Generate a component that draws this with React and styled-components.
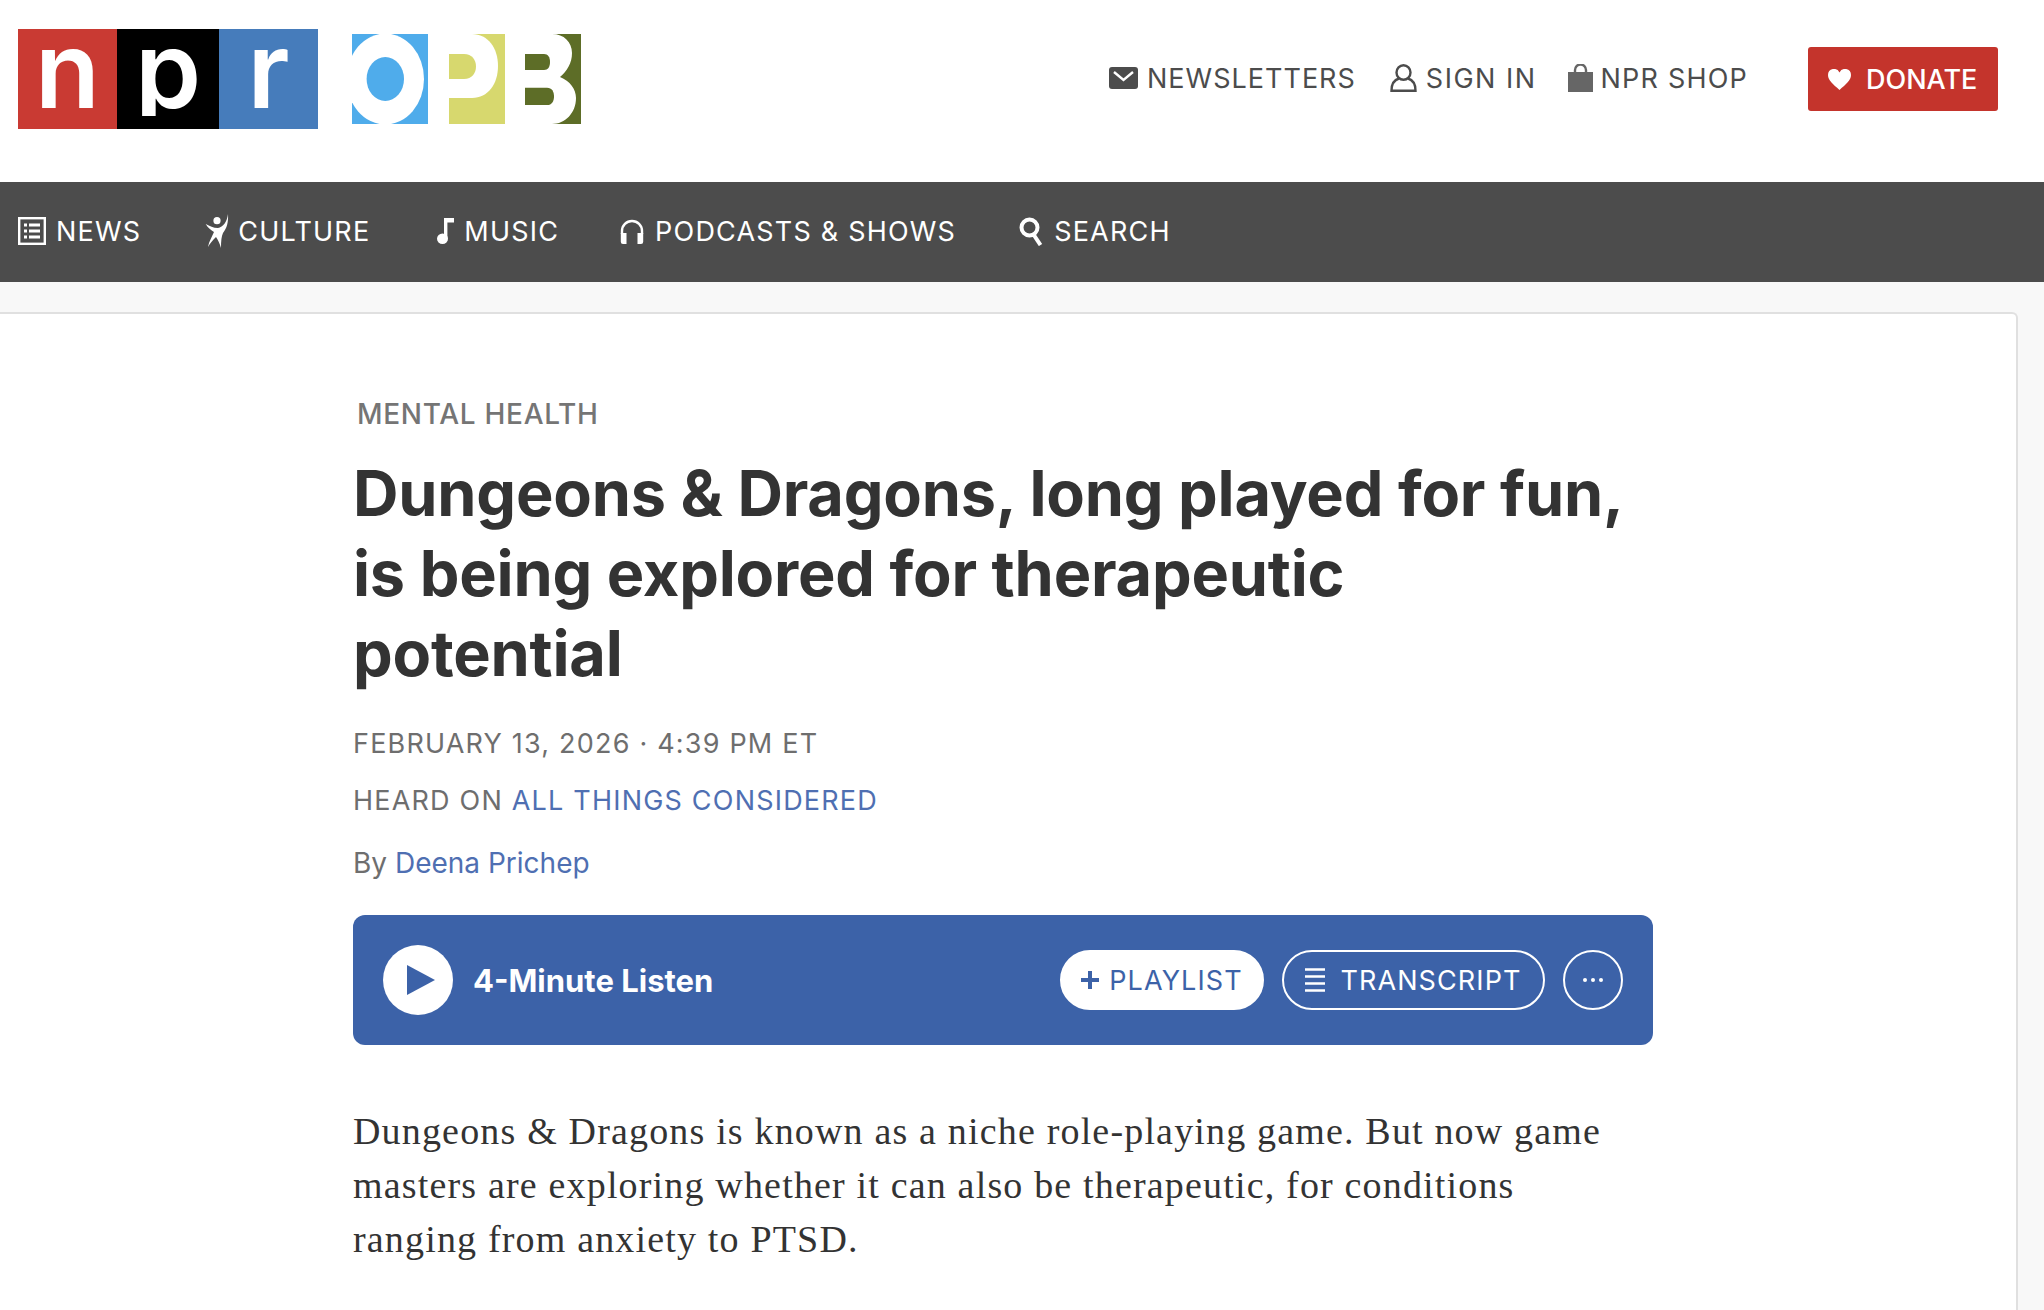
import styled, { createGlobalStyle } from "styled-components";

const GlobalStyle = createGlobalStyle`
  html, body {
    margin: 0;
    padding: 0;
    background: #f8f8f8;
  }
  body {
    font-family: "Inter", "Liberation Sans", sans-serif;
  }
`;

const MailIcon = () => (
  <svg width="29" height="22" viewBox="0 0 29 22">
    <rect width="29" height="22" rx="3" fill="#4c4c4c" />
    <path d="M5 5l9.500 8L24 5" fill="none" stroke="#fff" strokeWidth="2.400" />
  </svg>
);

const UserIcon = () => (
  <svg width="27" height="28" viewBox="0 0 27 28" fill="none" stroke="#4c4c4c" strokeWidth="2.400">
    <ellipse cx="13.500" cy="8.500" rx="7" ry="7.300" />
    <path d="M9 14.500C4 16 1.500 19.500 1.500 26.700h24C25.500 19.500 23 16 18 14.500" />
  </svg>
);

const BagIcon = () => (
  <svg width="25" height="28" viewBox="0 0 25 28">
    <rect y="8" width="25" height="20" fill="#666" />
    <path d="M7 9V6a5.500 5.500 0 0 1 11 0v3" fill="none" stroke="#666" strokeWidth="2.400" />
  </svg>
);

const HeartIcon = () => (
  <svg width="23" height="21" viewBox="0 0 23 21">
    <path d="M11.500 21C5 15 0 11.500 0 6a6 6 0 0 1 11.500-2.400A6 6 0 0 1 23 6c0 5.500-5 9-11.500 15z" fill="#fff" />
  </svg>
);

const NewsIcon = () => (
  <svg width="28" height="28" viewBox="0 0 28 28" fill="none" stroke="#fff">
    <rect x="1.200" y="1.200" width="25.600" height="25.600" strokeWidth="2.400" />
    <path d="M6 8h3M11 8h11M6 14h3M11 14h11M6 20h3M11 20h11" strokeWidth="3" />
  </svg>
);

const CultureIcon = () => (
  <svg width="24" height="35" viewBox="0 0 24 35" fill="#fff">
    <circle cx="12" cy="6.700" r="3.600" />
    <path d="M.7 10C5 12 8 14 13 14c5-1 9-6 10-14 .5 8-1 14-5 19-1.500 3-2 8-2 15-1.500-5-3-8-5-11-3 3-6 6-8 10 1-6 4-10 6-15-3-2-6-4-8.300-8z" />
  </svg>
);

const NoteIcon = () => (
  <svg width="17" height="26" viewBox="0 0 17 26" fill="#fff">
    <rect x="7" width="10" height="4.500" />
    <rect x="7" width="3.400" height="21" />
    <ellipse cx="5.500" cy="20.800" rx="5.500" ry="5.200" />
  </svg>
);

const HeadphonesIcon = () => (
  <svg width="24" height="25" viewBox="0 0 24 25">
    <path d="M2 15v-3a10 10 0 0 1 20 0v3" fill="none" stroke="#fff" strokeWidth="2.400" />
    <path d="M.8 14h5.700v11H3a2.200 2.200 0 0 1-2.200-2.200zM23.200 14h-5.700v11H21a2.200 2.200 0 0 0 2.200-2.200z" fill="#fff" />
  </svg>
);

const SearchIcon = () => (
  <svg width="24" height="29" viewBox="0 0 24 29" fill="none" stroke="#fff">
    <circle cx="10.500" cy="10.500" r="8" strokeWidth="4" />
    <path d="M14.500 17.500L21.500 28" strokeWidth="4" />
  </svg>
);

const PlayIcon = () => (
  <svg width="28" height="30" viewBox="0 0 28 30">
    <path d="M0 0l28 15L0 30z" fill="#3c62a8" />
  </svg>
);

const PlusIcon = () => (
  <svg width="18" height="18" viewBox="0 0 18 18">
    <path d="M9 0v18M0 9h18" stroke="#3c62a8" strokeWidth="4" />
  </svg>
);

const LinesIcon = () => (
  <svg width="20" height="24" viewBox="0 0 20 24">
    <path d="M0 1.500h20M0 8.500h20M0 15.500h20M0 22.500h20" stroke="#fff" strokeWidth="2.600" />
  </svg>
);

// the OPB mark: coloured tiles with the white letterforms laid over them
const OpbLogo = () => (
  <svg width="229" height="90" viewBox="0 0 229 90">
    <rect width="76" height="90" fill="#4faceb" />
    <ellipse cx="33.300" cy="45" rx="38.700" ry="45.500" fill="#fff" />
    <ellipse cx="33.300" cy="45" rx="18.700" ry="22" fill="#4faceb" />
    <rect x="97" width="56" height="90" fill="#d7d86e" />
    <path d="M97 0h23c16 0 26 14 26 32s-10 32-26 32H97z" fill="#fff" />
    <path d="M97 20h15c8 0 12 6 12 12.500S120 45 112 45H97z" fill="#d7d86e" />
    <rect x="173" width="56" height="90" fill="#5d6d27" />
    <path d="M173 0h27c12 0 20 8 20 19 0 10-5 18-12 24 10 4 16 12 16 21 0 15-11 26-24 26h-27z" fill="#fff" />
    <path d="M173 20h19c4 0 6 3 6 8s-2 8-6 8h-19z" fill="#5d6d27" />
    <path d="M173 53.700h22c5 0 7 4 7 8.700S200 71 195 71h-22z" fill="#5d6d27" />
  </svg>
);

const Header = styled.header`
  height: 182px;
  box-sizing: border-box;
  background: #fff;
  display: flex;
  align-items: center;
  justify-content: space-between;
  padding: 0 46px 24px 18px;
`;

const Logos = styled.div`
  display: flex;
  align-items: center;
  gap: 34px;
`;

const NprLogo = styled.div`
  display: flex;
`;

const NprTile = styled.span`
  width: ${(p) => p.$width}px;
  height: 100px;
  background: ${(p) => p.$color};
  color: #fff;
  font-family: "Inter", sans-serif;
  font-weight: 600;
  font-size: 106px;
  line-height: 81px;
  text-align: center;
`;

// the logo's p has a short tail, so the letter stops above the tile's foot
const NprLetter = styled.span`
  display: block;
  clip-path: inset(-20px -20px -6px -20px);
`;

const UtilityNav = styled.nav`
  display: flex;
  align-items: center;
`;

const UtilityLink = styled.a`
  display: flex;
  align-items: center;
  gap: ${(p) => p.$gap}px;
  margin-right: ${(p) => p.$after}px;
  padding-bottom: 2px;
  color: #4c4c4c;
  font-size: 27px;
  letter-spacing: ${(p) => p.$spacing}px;
`;

const DonateButton = styled.a`
  width: 190px;
  height: 64px;
  box-sizing: border-box;
  display: flex;
  align-items: center;
  gap: 15px;
  padding-left: 20px;
  background: #c4342c;
  border-radius: 3px;
  color: #fff;
  font-size: 27px;
  font-weight: 500;
`;

const MainNav = styled.nav`
  height: 100px;
  box-sizing: border-box;
  background: #4c4c4c;
  display: flex;
  align-items: center;
  padding: 0 0 2px 18px;
`;

const MainNavLink = styled.a`
  display: flex;
  align-items: center;
  gap: ${(p) => p.$gap}px;
  margin-right: ${(p) => p.$after}px;
  color: #fff;
  font-size: 27px;
  letter-spacing: 1.200px;
`;

const Card = styled.main`
  margin: 30px 26px 0 0;
  height: 998px;
  box-sizing: border-box;
  background: #fff;
  border: 2px solid #e0e0e0;
  border-left: none;
  border-bottom: none;
  border-radius: 0 6px 0 0;
  padding: 82px 0 0 353px;
  overflow: hidden;
`;

const Article = styled.article`
  width: 1300px;
`;

const Kicker = styled.div`
  margin-left: 4px;
  color: #757575;
  font-size: 28px;
  line-height: 36px;
  font-weight: 500;
  letter-spacing: 0.700px;
`;

const Title = styled.h1`
  margin: 21px 0 0;
  max-width: 1272px;
  color: #333;
  font-size: 63px;
  line-height: 80px;
  font-weight: 700;
  letter-spacing: -0.200px;
`;

const MetaLine = styled.div`
  margin-top: ${(p) => p.$top}px;
  color: #6e6e6e;
  font-size: ${(p) => p.$size}px;
  line-height: 36px;
  letter-spacing: ${(p) => p.$spacing}px;
`;

const MetaLink = styled.a`
  color: #4f6fb2;
`;

const PlayerBar = styled.div`
  margin-top: 34px;
  height: 130px;
  box-sizing: border-box;
  background: #3c62a8;
  border-radius: 12px;
  display: flex;
  align-items: center;
  padding: 0 30px;
`;

const PlayButton = styled.button`
  width: 70px;
  height: 70px;
  border: none;
  border-radius: 50%;
  background: #fff;
  padding: 0 0 0 6px;
  display: flex;
  align-items: center;
  justify-content: center;
`;

const ListenLabel = styled.span`
  margin-left: 20px;
  flex: 1;
  color: #fff;
  font-size: 31px;
  font-weight: 700;
`;

const PillButton = styled.button`
  height: 60px;
  width: ${(p) => p.$width}px;
  box-sizing: border-box;
  margin-left: ${(p) => p.$left}px;
  border: 2px solid #fff;
  border-radius: 30px;
  background: ${(p) => (p.$filled ? "#fff" : "transparent")};
  color: ${(p) => (p.$filled ? "#3c62a8" : "#fff")};
  display: flex;
  align-items: center;
  justify-content: center;
  gap: ${(p) => p.$gap || 0}px;
  padding: 0;
  font-family: "Inter", sans-serif;
  font-size: 27px;
  letter-spacing: 1.100px;
`;

const MoreDots = styled.span`
  display: flex;
  gap: 4px;
  & > i {
    width: 4px;
    height: 4px;
    border-radius: 50%;
    background: #fff;
  }
`;

const Summary = styled.p`
  margin: 59px 0 0;
  width: 1270px;
  color: #333;
  font-family: "Liberation Serif", serif;
  font-size: 38px;
  line-height: 54px;
  letter-spacing: 1.170px;
`;

export default function App() {
  return (
    <>
      <GlobalStyle />
      <Header>
        <Logos>
          <NprLogo>
            <NprTile $width={99} $color="#c93a33"><NprLetter>n</NprLetter></NprTile>
            <NprTile $width={102} $color="#000"><NprLetter>p</NprLetter></NprTile>
            <NprTile $width={99} $color="#467cbb"><NprLetter>r</NprLetter></NprTile>
          </NprLogo>
          <OpbLogo />
        </Logos>
        <UtilityNav>
          <UtilityLink $gap={9} $after={34} $spacing={1}><MailIcon />NEWSLETTERS</UtilityLink>
          <UtilityLink $gap={9} $after={31} $spacing={1.5}><UserIcon />SIGN IN</UtilityLink>
          <UtilityLink $gap={8} $after={60} $spacing={1.2}><BagIcon />NPR SHOP</UtilityLink>
          <DonateButton><HeartIcon />DONATE</DonateButton>
        </UtilityNav>
      </Header>
      <MainNav>
        <MainNavLink $gap={10} $after={64}><NewsIcon />NEWS</MainNavLink>
        <MainNavLink $gap={9} $after={67}><CultureIcon />CULTURE</MainNavLink>
        <MainNavLink $gap={10} $after={61}><NoteIcon />MUSIC</MainNavLink>
        <MainNavLink $gap={11} $after={63}><HeadphonesIcon />PODCASTS &amp; SHOWS</MainNavLink>
        <MainNavLink $gap={11} $after={0}><SearchIcon />SEARCH</MainNavLink>
      </MainNav>
      <Card>
        <Article>
          <Kicker>MENTAL HEALTH</Kicker>
          <Title>
            Dungeons &amp; Dragons, long played for fun, is being explored for therapeutic potential
          </Title>
          <MetaLine $top={33} $size={27} $spacing={1.2}>FEBRUARY 13, 2026 · 4:39 PM ET</MetaLine>
          <MetaLine $top={21} $size={27} $spacing={1.2}>HEARD ON <MetaLink>ALL THINGS CONSIDERED</MetaLink></MetaLine>
          <MetaLine $top={26} $size={28} $spacing={0}>By <MetaLink>Deena Prichep</MetaLink></MetaLine>
          <PlayerBar>
            <PlayButton><PlayIcon /></PlayButton>
            <ListenLabel>4-Minute Listen</ListenLabel>
            <PillButton $filled $width={204} $gap={10}><PlusIcon />PLAYLIST</PillButton>
            <PillButton $width={263} $left={18} $gap={15}><LinesIcon />TRANSCRIPT</PillButton>
            <PillButton $width={60} $left={18}><MoreDots><i /><i /><i /></MoreDots></PillButton>
          </PlayerBar>
          <Summary>
            Dungeons &amp; Dragons is known as a niche role-playing game. But now game masters are exploring whether it can also be therapeutic, for conditions ranging from anxiety to PTSD.
          </Summary>
        </Article>
      </Card>
    </>
  );
}
